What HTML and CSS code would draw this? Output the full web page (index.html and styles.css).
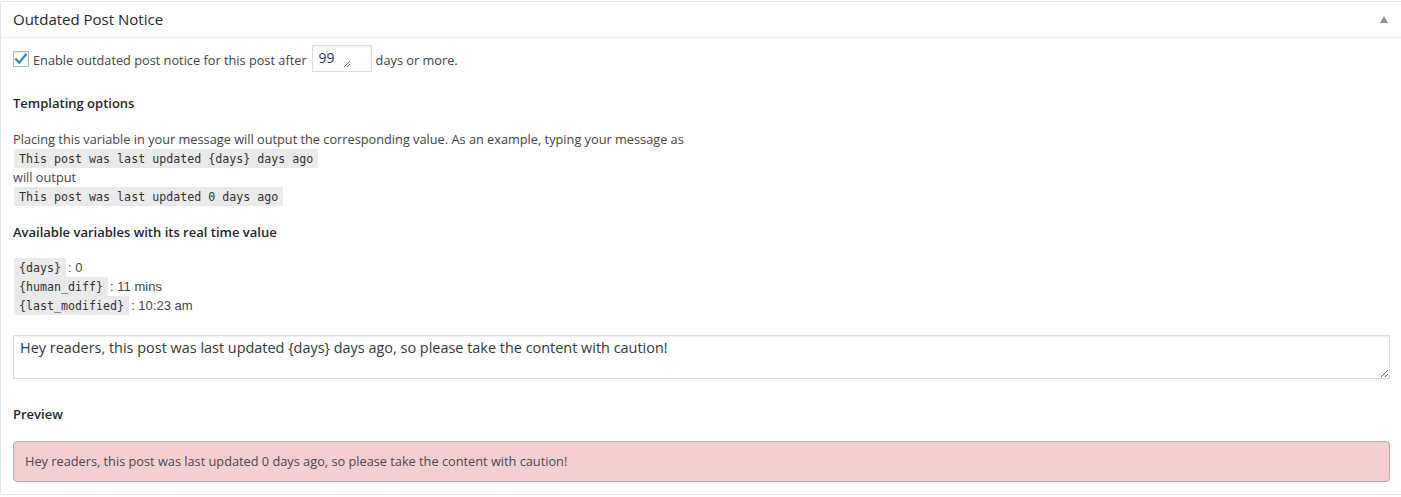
FILE: index.html
```html
<!DOCTYPE html>
<html>
<head>
<meta charset="utf-8">
<link rel="stylesheet" href="styles.css">
</head>
<body>
<div class="postbox">
  <div class="hndle">
    <h2 class="title">Outdated Post Notice</h2>
    <span class="toggle"><span class="arrow"></span></span>
  </div>
  <div class="inside">
    <div class="enable-row">
      <span class="checkbox"><svg width="14" height="14" viewBox="0 0 14 14"><path d="M2.2 7.4 L5.2 10.6 L11.8 2.6" fill="none" stroke="#1e8cbe" stroke-width="2.2" stroke-linecap="square"/></svg></span>
      <span class="label">Enable outdated post notice for this post after</span>
      <span class="days-box"><span class="days-val">99</span><svg class="grip-small" width="8" height="8" viewBox="0 0 8 8"><path d="M7 1 L1 7 M7 4 L4 7" stroke="#777" stroke-width="1"/></svg></span>
      <span class="label">days or more.</span>
    </div>

    <h4 class="subhead first">Templating options</h4>
    <div class="line text-line">Placing this variable in your message will output the corresponding value. As an example, typing your message as</div>
    <div class="line"><code class="code">This post was last updated {days} days ago</code></div>
    <div class="line text-line">will output</div>
    <div class="line"><code class="code">This post was last updated 0 days ago</code></div>

    <h4 class="subhead second">Available variables with its real time value</h4>
    <div class="vars">
      <div class="line"><code class="code">{days}</code><span class="val">: 0</span></div>
      <div class="line"><code class="code">{human_diff}</code><span class="val">: 11 mins</span></div>
      <div class="line"><code class="code">{last_modified}</code><span class="val">: 10:23 am</span></div>
    </div>

    <textarea class="message">Hey readers, this post was last updated {days} days ago, so please take the content with caution!</textarea>

    <h4 class="subhead preview-head">Preview</h4>
    <div class="preview">Hey readers, this post was last updated 0 days ago, so please take the content with caution!</div>
  </div>
</div>
</body>
</html>
```

FILE: styles.css
```css
html, body {
  margin: 0;
  padding: 0;
  background: #ffffff;
}
body {
  font-family: "Open Sans", "Noto Sans", sans-serif;
  font-size: 12.75px;
  color: #444;
}
.postbox {
  margin-top: 1px;
  width: 1401px;
  border: 1px solid #e5e5e5;
  box-shadow: 0 1px 1px rgba(0,0,0,0.04);
  background: #fff;
}
.hndle {
  display: flex;
  align-items: center;
  justify-content: space-between;
  border-bottom: 1px solid #eee;
}
.title {
  margin: 0;
  padding: 8px 12px;
  font-size: 15px;
  line-height: 19px;
  font-weight: 400;
  color: #23282d;
}
.toggle {
  width: 36px;
  height: 35px;
  display: flex;
  align-items: center;
  justify-content: center;
}
.arrow {
  width: 0;
  height: 0;
  border-left: 4px solid transparent;
  border-right: 4px solid transparent;
  border-bottom: 7px solid #8f9296;
  margin-top: -1px;
}
.inside {
  padding: 7px 12px 12px;
}
.enable-row {
  display: flex;
  align-items: center;
  height: 27px;
}
.checkbox {
  width: 14px;
  height: 14px;
  border: 1px solid #b4b9be;
  box-shadow: inset 0 1px 2px rgba(0,0,0,0.1);
  background: #fff;
  display: inline-flex;
  align-items: center;
  justify-content: center;
  margin: 1px 4px 0 0;
}
.label {
  line-height: 18px;
  margin-top: 3px;
}
.days-box {
  position: relative;
  width: 58px;
  height: 25px;
  border: 1px solid #ddd;
  box-shadow: inset 0 1px 2px rgba(0,0,0,0.07);
  margin: 0 4px 0 5px;
  font-size: 14px;
  line-height: 19px;
  box-sizing: content-box;
}
.days-val {
  display: block;
  padding: 2px 6px;
  color: #32373c;
}
.grip-small {
  position: absolute;
  left: 30px;
  top: 14px;
}
.subhead {
  margin: 0;
  font-size: 13px;
  line-height: 18px;
  font-weight: 600;
  color: #23282d;
}
.subhead.first {
  margin-top: 22px;
  margin-bottom: 18px;
}
.subhead.second {
  margin-top: 17px;
  margin-bottom: 17px;
}
.line {
  height: 19px;
  line-height: 19px;
  white-space: nowrap;
}
.code {
  display: inline-block;
  height: 19px;
  line-height: 20px;
  padding: 0 5px;
  margin-left: 1px;
  background: #eaeaea;
  font-family: "DejaVu Sans Mono", "Liberation Mono", monospace;
  font-size: 11.65px;
  color: #333;
  vertical-align: top;
}
.val {
  margin-left: 2px;
  font-family: "Liberation Sans", Arial, sans-serif;
  font-size: 13px;
  color: #444;
}
.message {
  display: block;
  box-sizing: border-box;
  width: 100%;
  height: 44px;
  margin: 20px 0 0;
  padding: 2px 6px;
  border: 1px solid #ddd;
  box-shadow: inset 0 1px 2px rgba(0,0,0,0.07);
  font-family: "Open Sans", "Noto Sans", sans-serif;
  font-size: 14.45px;
  line-height: 19.6px;
  color: #32373c;
  resize: vertical;
  outline: none;
}
.subhead.preview-head {
  margin-top: 26px;
  margin-bottom: 18px;
}
.preview {
  box-sizing: border-box;
  height: 41px;
  padding: 10px 11px;
  line-height: 19px;
  background: #f5cfcf;
  border: 1px solid #cfa8a8;
  border-radius: 4px;
  color: #4a4a55;
}
```
